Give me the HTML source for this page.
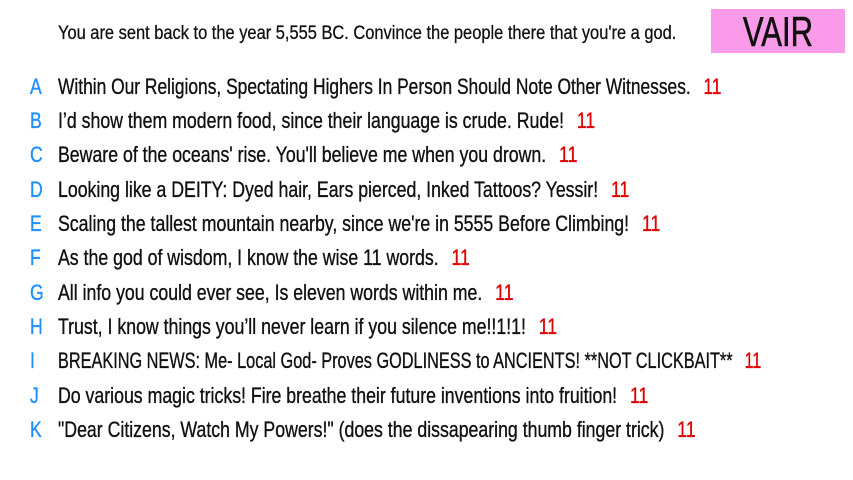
<!DOCTYPE html>
<html><head><meta charset="utf-8"><style>
body{margin:0;width:853px;height:480px;background:#fff;overflow:hidden;position:relative;font-family:"Liberation Sans",sans-serif;color:#111;}
.h{position:absolute;left:58px;top:22px;font-size:19px;line-height:24px;white-space:nowrap;transform:scaleX(0.865);transform-origin:0 50%;-webkit-text-stroke:0.3px #111;}
.v{position:absolute;left:711px;top:9px;width:134px;height:44px;background:#f99be9;}
.v span{position:absolute;left:0;width:134px;top:0;font-size:42px;line-height:46px;text-align:center;color:#111;transform:scaleX(0.74);-webkit-text-stroke:0.6px #111;}
.r{position:absolute;left:0;height:30px;line-height:30px;font-size:22px;white-space:nowrap;-webkit-text-stroke:0.35px currentColor;}
.l{position:absolute;left:30px;color:#1e90ff;display:inline-block;transform:scaleX(0.8);transform-origin:0 50%;}
.t{position:absolute;left:58px;display:inline-block;transform:scaleX(0.805);transform-origin:0 50%;}
.n{color:#e00000;margin-left:16px;}
</style></head><body>
<div class="h">You are sent back to the year 5,555 BC. Convince the people there that you're a god.</div>
<div class="v"><span>VAIR</span></div>
<div class="r" style="top:72px"><span class="l">A</span><span class="t" style="transform:scaleX(0.79)">Within Our Religions, Spectating Highers In Person Should Note Other Witnesses.<span class="n">11</span></span></div>
<div class="r" style="top:106px"><span class="l">B</span><span class="t">I’d show them modern food, since their language is crude. Rude!<span class="n">11</span></span></div>
<div class="r" style="top:140px"><span class="l">C</span><span class="t">Beware of the oceans' rise. You'll believe me when you drown.<span class="n">11</span></span></div>
<div class="r" style="top:175px"><span class="l">D</span><span class="t">Looking like a DEITY: Dyed hair, Ears pierced, Inked Tattoos? Yessir!<span class="n">11</span></span></div>
<div class="r" style="top:209px"><span class="l">E</span><span class="t">Scaling the tallest mountain nearby, since we're in 5555 Before Climbing!<span class="n">11</span></span></div>
<div class="r" style="top:243px"><span class="l">F</span><span class="t">As the god of wisdom, I know the wise 11 words.<span class="n">11</span></span></div>
<div class="r" style="top:278px"><span class="l">G</span><span class="t">All info you could ever see, Is eleven words within me.<span class="n">11</span></span></div>
<div class="r" style="top:312px"><span class="l">H</span><span class="t">Trust, I know things you’ll never learn if you silence me!!1!1!<span class="n">11</span></span></div>
<div class="r" style="top:346px"><span class="l">I</span><span class="t" style="transform:scaleX(0.74)">BREAKING NEWS: Me- Local God- Proves GODLINESS to ANCIENTS! **NOT CLICKBAIT**<span class="n">11</span></span></div>
<div class="r" style="top:381px"><span class="l">J</span><span class="t">Do various magic tricks! Fire breathe their future inventions into fruition!<span class="n">11</span></span></div>
<div class="r" style="top:415px"><span class="l">K</span><span class="t">"Dear Citizens, Watch My Powers!" (does the dissapearing thumb finger trick)<span class="n">11</span></span></div>
</body></html>
